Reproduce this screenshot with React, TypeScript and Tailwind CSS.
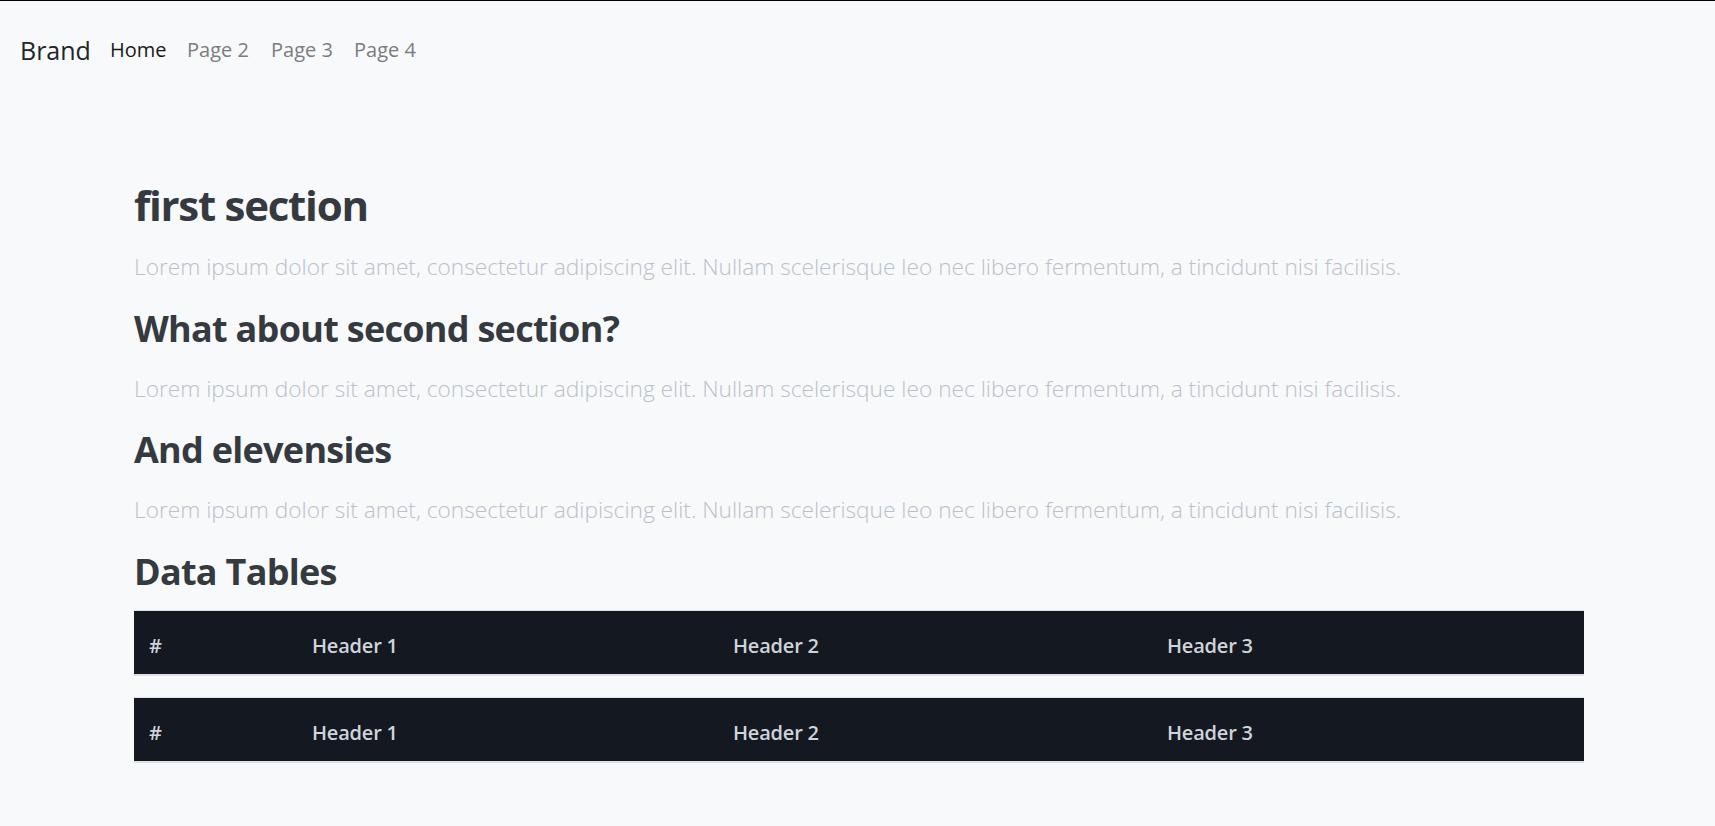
import React from "react";

const lorem =
  "Lorem ipsum dolor sit amet, consectetur adipiscing elit. Nullam scelerisque leo nec libero fermentum, a tincidunt nisi facilisis.";

type Section = { title: string; big?: boolean };

const sections: Section[] = [
  { title: "first section", big: true },
  { title: "What about second section?" },
  { title: "And elevensies" },
];

const headers = ["#", "Header 1", "Header 2", "Header 3"];

function DataTable() {
  return (
    <table className="w-full table-fixed border-separate border-spacing-0">
      <colgroup>
        <col className="w-[163px]" />
        <col className="w-[421px]" />
        <col className="w-[434px]" />
        <col />
      </colgroup>
      <thead>
        <tr className="bg-[#131821]">
          {headers.map((h) => (
            <th
              key={h}
              className="h-[66px] pt-[7px] px-[15px] text-left text-[20px] tracking-[-0.01em] font-semibold text-[#cfd4da] border-t border-b-2 border-[#dee2e6]"
            >
              {h}
            </th>
          ))}
        </tr>
      </thead>
    </table>
  );
}

export default function App() {
  return (
    <div className="min-h-screen bg-[#f8f9fa] border-t border-black font-['Open_Sans','Noto_Sans',sans-serif]">
      <nav className="h-[98px] flex items-center pl-[20px]">
        <a className="w-[90px] text-[25px] leading-[38px] text-[#212529]">Brand</a>
        <a className="w-[77px] text-[20px] leading-[30px] text-[#1a1a1a]">Home</a>
        <a className="w-[84px] text-[20px] leading-[30px] text-[#7b7c7e]">Page 2</a>
        <a className="w-[83px] text-[20px] leading-[30px] text-[#7b7c7e]">Page 3</a>
        <a className="text-[20px] leading-[30px] text-[#7b7c7e]">Page 4</a>
      </nav>

      <main className="ml-[134px] w-[1450px] pt-[77px] pb-[60px]">
        {sections.map((s) => (
          <section key={s.title}>
            {s.big ? (
              <h1 className="text-[42px] leading-[58px] font-bold text-[#343a40] tracking-[-0.03em] mb-[16px]">
                {s.title}
              </h1>
            ) : (
              <h2 className="text-[36px] leading-[48px] font-bold text-[#343a40] tracking-[-0.02em] mb-[19px]">
                {s.title}
              </h2>
            )}
            <p className="text-[22.7px] leading-[34px] font-light text-[#bac1ca] mb-[20.5px]">{lorem}</p>
          </section>
        ))}

        <h2 className="text-[36px] leading-[48px] font-bold text-[#343a40] tracking-[-0.02em] mb-[14px]">
          Data Tables
        </h2>
        <DataTable />
        <div className="h-[21px]" />
        <DataTable />
      </main>
    </div>
  );
}
